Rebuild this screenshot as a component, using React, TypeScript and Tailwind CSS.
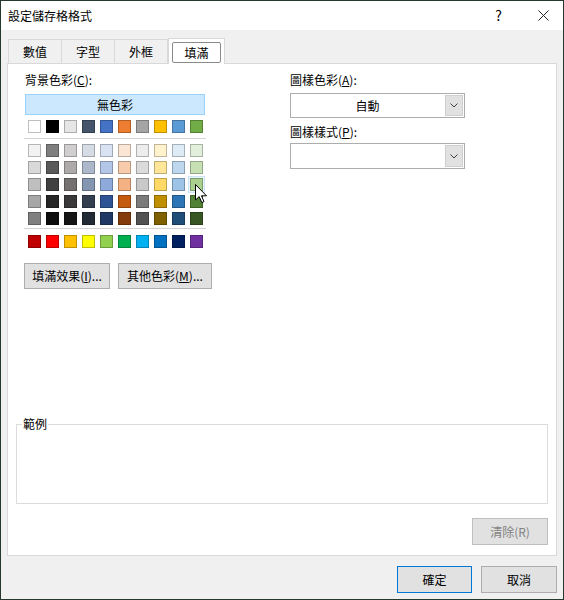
const theme = ["#FFFFFF", "#000000", "#E7E6E6", "#44546A", "#4472C4", "#ED7D31", "#A5A5A5", "#FFC000", "#5B9BD5", "#70AD47"];

const tints = [
  ["#F2F2F2", "#7F7F7F", "#D0CECE", "#D6DCE4", "#D9E2F3", "#FBE5D5", "#EDEDED", "#FFF2CC", "#DDEBF7", "#E2EFDA"],
  ["#D9D9D9", "#595959", "#AEAAAA", "#ADB9CA", "#B4C6E7", "#F7CBAC", "#DBDBDB", "#FFE699", "#BDD7EE", "#C6E0B4"],
  ["#BFBFBF", "#404040", "#757171", "#8496B0", "#8EAADB", "#F4B183", "#C9C9C9", "#FFD966", "#9DC3E6", "#A9D08E"],
  ["#A6A6A6", "#262626", "#3A3838", "#333F4F", "#2F5496", "#C55A11", "#7B7B7B", "#BF8F00", "#2E75B5", "#538135"],
  ["#808080", "#0D0D0D", "#171616", "#222A35", "#1F3864", "#843C0C", "#525252", "#7F6000", "#1F4E79", "#375623"],
];

const standard = ["#C00000", "#FF0000", "#FFC000", "#FFFF00", "#92D050", "#00B050", "#00B0F0", "#0070C0", "#002060", "#7030A0"];

const font = { fontFamily: '"Noto Sans CJK TC", "Noto Sans", sans-serif' };

function Swatch({ color, hover }: { color: string; hover?: boolean }) {
  return (
    <div className="relative w-[13px] h-[13px]">
      {hover && <div className="absolute -inset-[2px] border border-[#cde6f7] bg-[#eaf4fc]" />}
      <div className="relative w-[13px] h-[13px] border border-black/25" style={{ backgroundColor: color }} />
    </div>
  );
}

function Row({ colors, hoverIndex }: { colors: string[]; hoverIndex?: number }) {
  return (
    <div className="flex gap-[5px] pl-[3px]">
      {colors.map((c, i) => (
        <Swatch key={c + i} color={c} hover={i === hoverIndex} />
      ))}
    </div>
  );
}

function Chevron() {
  return (
    <svg width="8" height="5" viewBox="0 0 8 5" fill="none">
      <path d="M0.5 0.5 L4 4 L7.5 0.5" stroke="#404040" strokeWidth="1" />
    </svg>
  );
}

function Select({ value, h }: { value?: string; h: string }) {
  return (
    <div className={`flex w-[175px] ${h} border border-[#adadad] bg-white`}>
      <div className="flex-1 flex items-center justify-center text-[12px] text-black">{value}</div>
      <div className="w-[18px] m-px border border-[#cfcfcf] bg-[#e1e1e1] flex items-center justify-center">
        <Chevron />
      </div>
    </div>
  );
}

function Btn({ children, className }: { children: React.ReactNode; className: string }) {
  return (
    <div className={`shrink-0 flex items-center justify-center border bg-[#e1e1e1] text-[12px] ${className}`}>
      {children}
    </div>
  );
}

export default function App() {
  return (
    <div
      className="w-[564px] h-[600px] flex flex-col border border-[#24392c] bg-[#f0f0f0] text-black overflow-hidden"
      style={font}
    >
      {/* title bar */}
      <div className="h-[29px] bg-white flex items-center pl-[7px] pr-[14px] text-[12px]">
        <span className="flex-1">設定儲存格格式</span>
        <span className="text-[14px] mr-[36px]">?</span>
        <svg width="11" height="11" viewBox="0 0 11 11">
          <path d="M0.5 0.5 L10.5 10.5 M10.5 0.5 L0.5 10.5" stroke="#222" strokeWidth="1" />
        </svg>
      </div>

      {/* tabs */}
      <div className="flex items-end h-[33px] pl-[7px] text-[12px]">
        <div className="w-[53px] h-[24px] border-t border-l border-[#d9d9d9] flex items-center justify-center">數值</div>
        <div className="w-[53px] h-[24px] border-t border-l border-[#d9d9d9] flex items-center justify-center">字型</div>
        <div className="w-[54px] h-[24px] border-t border-l border-r border-[#d9d9d9] flex items-center justify-center">外框</div>
        <div className="relative w-[57px] h-[26px] -mb-px z-10 bg-white border-t border-l border-r border-[#d9d9d9] flex items-center justify-center">
          <div className="w-[49px] h-[21px] mt-[2px] rounded-[2px] border border-[#8a8a8a] flex items-center justify-center">填滿</div>
        </div>
      </div>

      {/* panel */}
      <div className="mx-[6px] h-[493px] bg-white border border-[#d9d9d9] flex flex-col text-[12px]">
        <div className="flex pl-[17px]">
          {/* left column */}
          <div className="relative w-[180px] flex flex-col">
            <div className="mt-[9px] h-[14px] leading-[14px]">
              背景色彩(<span className="underline">C</span>):
            </div>
            <div className="mt-[7px] h-[21px] border border-[#99d1ff] bg-[#cce8ff] flex items-center justify-center">
              無色彩
            </div>
            <div className="mt-[5px]">
              <Row colors={theme} />
            </div>
            <div className="mt-[5px] -ml-px w-[182px] h-px bg-[#d4d4d4]" />
            <div className="mt-[5px] flex flex-col gap-[4px]">
              {tints.map((r, i) => (
                <Row key={i} colors={r} hoverIndex={i === 2 ? 9 : undefined} />
              ))}
            </div>
            <div className="mt-[3px] -ml-px w-[182px] h-px bg-[#d4d4d4]" />
            <div className="mt-[6px]">
              <Row colors={standard} />
            </div>
            <div className="mt-[15px] -ml-px flex gap-[8px]">
              <Btn className="w-[86px] h-[26px] border-[#adadad]">
                填滿效果(<span className="underline">I</span>)...
              </Btn>
              <Btn className="w-[94px] h-[26px] border-[#adadad]">
                其他色彩(<span className="underline">M</span>)...
              </Btn>
            </div>
            {/* mouse pointer */}
            <svg className="absolute left-[170px] top-[120px]" width="13" height="20" viewBox="0 0 13 20">
              <path d="M0.5 0.5 L0.5 16 L4.2 12.6 L6.8 18.6 L9 17.6 L6.5 11.8 L11.5 11.8 Z" fill="#fff" stroke="#000" strokeWidth="1" strokeLinejoin="round" />
            </svg>
          </div>

          {/* right column */}
          <div className="ml-[85px] w-[175px] flex flex-col">
            <div className="mt-[9px] h-[14px] leading-[14px]">
              圖樣色彩(<span className="underline">A</span>):
            </div>
            <div className="mt-[6px]">
              <Select value="自動" h="h-[25px]" />
            </div>
            <div className="mt-[7px] h-[14px] leading-[14px]">
              圖樣樣式(<span className="underline">P</span>):
            </div>
            <div className="mt-[4px]">
              <Select h="h-[26px]" />
            </div>
          </div>
        </div>

        <div className="mt-auto mx-[8px] relative h-[80px] border border-[#dcdcdc]">
          <span className="absolute left-[5px] -top-[9px] bg-white px-px leading-[16px]">範例</span>
        </div>
        <div className="mt-[14px] mr-[8px] mb-[10px] flex justify-end">
          <Btn className="w-[76px] h-[27px] border-[#bfbfbf] bg-[#cccccc] text-[#838383]">清除(R)</Btn>
        </div>
      </div>

      {/* footer */}
      <div className="mt-[10px] mr-[6px] flex justify-end gap-[9px]">
        <Btn className="w-[75px] h-[27px] border-[#0078d7]">確定</Btn>
        <Btn className="w-[76px] h-[27px] border-[#adadad]">取消</Btn>
      </div>
    </div>
  );
}
